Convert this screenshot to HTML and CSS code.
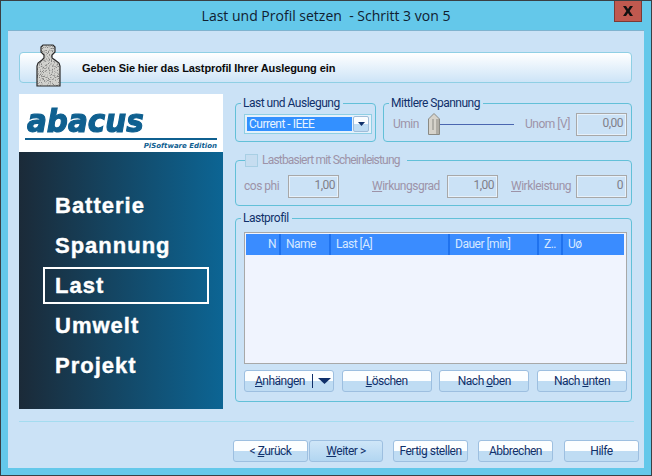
FILE: index.html
```html
<!DOCTYPE html>
<html lang="de">
<head>
    <meta charset="UTF-8" />
    <title>Last und Profil setzen</title>
    <link rel="stylesheet" href="styles.css">
</head>
<body>
<div class="window">
    <div class="titlebar">
        <span>Last und Profil setzen&nbsp; - Schritt 3 von 5</span>
        <div class="close">
            <svg width="12" height="10" viewBox="0 0 12 10"><path d="M1 0h3l2 3 2-3h3L7.600 5 11 10H8L6 7 4 10H1l3.400-5z" fill="#111"/></svg>
        </div>
    </div>
    <div class="client">
        <div class="banner">
            <svg class="weight" width="25" height="44" viewBox="0 0 25 44">
                <filter id="speckle" x="0" y="0" width="100%" height="100%" color-interpolation-filters="sRGB">
                    <feTurbulence type="fractalNoise" baseFrequency="0.9" numOctaves="2" seed="4"/>
                    <feColorMatrix values="0 0 0 0 0.5 0 0 0 0 0.5 0 0 0 0 0.5 5 0 0 0 -2.500"/>
                    <feComposite in2="SourceGraphic" operator="in" result="dots"/>
                    <feMerge><feMergeNode in="SourceGraphic"/><feMergeNode in="dots"/></feMerge>
                </filter>
                <path d="M7 1h10l2 2v5l-3 3v3l3 2 4 3 1 3v20H1V22l1-3 4-3 2-2v-3L5 8V3z" fill="#d2d2ce" filter="url(#speckle)"/>
                <path d="M7 1h10l2 2v5l-3 3v3l3 2 4 3 1 3v20H1V22l1-3 4-3 2-2v-3L5 8V3z" fill="none" stroke="#2a2a2a" stroke-width="1.200"/>
            </svg>
            <b>Geben Sie hier das Lastprofil Ihrer Auslegung ein</b>
        </div>
        <div class="main">
            <div class="sidebar">
                <div class="logo">
                    <div class="logo-name"><span>abacus</span></div>
                    <div class="logo-sub">PiSoftware Edition</div>
                </div>
                <ul class="nav">
                    <li>Batterie</li>
                    <li>Spannung</li>
                    <li class="active">Last</li>
                    <li>Umwelt</li>
                    <li>Projekt</li>
                </ul>
            </div>
            <div class="panel">
                <div class="top-row">
                    <fieldset class="group group-last">
                        <legend>Last und Auslegung</legend>
                        <div class="combo">
                            <span class="combo-value">Current - IEEE</span>
                            <span class="combo-btn"><svg width="7" height="4" viewBox="0 0 7 4"><path d="M0 0h7L3.500 4z" fill="#10306a"/></svg></span>
                        </div>
                    </fieldset>
                    <fieldset class="group group-volt">
                        <legend>Mittlere Spannung</legend>
                        <div class="row">
                            <span class="dim umin">Umin</span>
                            <div class="slider">
                                <svg class="thumb" width="12" height="22" viewBox="0 0 12 22"><path d="M.5 21.500V6L6 .5 11.500 6v15.500z" fill="#d6d3cb" stroke="#8a8a84"/><path d="M8 6v15h3V6z" fill="#b0ada5"/><path d="M5 6v11" stroke="#8a8a84"/></svg>
                            </div>
                            <span class="dim unom">Unom [V]</span>
                            <div class="value">0,00</div>
                        </div>
                    </fieldset>
                </div>
                <fieldset class="group group-load">
                    <legend class="dim"><span class="check"></span>Lastbasiert mit Scheinleistung</legend>
                    <div class="row">
                        <span class="dim cos">cos phi</span>
                        <div class="value">1,00</div>
                        <span class="dim wirk"><u>W</u>irkungsgrad</span>
                        <div class="value">1,00</div>
                        <span class="dim leist"><u>W</u>irkleistung</span>
                        <div class="value">0</div>
                    </div>
                </fieldset>
                <fieldset class="group group-profile">
                    <legend>Lastprofil</legend>
                    <div class="table">
                        <div class="thead">
                            <span class="col-n">N</span>
                            <span class="col-name">Name</span>
                            <span class="col-last">Last [A]</span>
                            <span class="col-dauer">Dauer [min]</span>
                            <span class="col-z">Z..</span>
                            <span class="col-u">Uø</span>
                        </div>
                    </div>
                    <div class="table-buttons">
                        <button class="btn split"><span class="split-label"><u>A</u>nhängen</span><svg width="13" height="6" viewBox="0 0 13 6"><path d="M0 0h13L6.500 6z" fill="#10306a"/></svg></button>
                        <button class="btn"><u>L</u>öschen</button>
                        <button class="btn">Nach <u>o</u>ben</button>
                        <button class="btn">Nach <u>u</u>nten</button>
                    </div>
                </fieldset>
            </div>
        </div>
        <div class="separator"></div>
        <div class="footer">
            <button class="btn">&lt; <u>Z</u>urück</button>
            <button class="btn default"><u>W</u>eiter &gt;</button>
            <button class="btn gap">Fertig stellen</button>
            <button class="btn gap">Abbrechen</button>
            <button class="btn gap">Hilfe</button>
        </div>
    </div>
</div>
</body>
</html>
```

FILE: styles.css
```css
* { margin: 0; padding: 0; box-sizing: border-box; }
body {
    width: 652px;
    height: 476px;
    overflow: hidden;
    font-family: 'Roboto', 'Liberation Sans', sans-serif;
    font-size: 12px;
    letter-spacing: -0.5px;
    color: #10306a;
}
.window {
    width: 652px;
    height: 476px;
    background: #64c8ea;
    border: 1px solid #3a3f44;
    display: flex;
    flex-direction: column;
}
.titlebar {
    height: 29px;
    flex: none;
    position: relative;
    display: flex;
    align-items: center;
    justify-content: center;
    font-family: 'Open Sans', sans-serif;
    font-size: 14px;
    letter-spacing: 0;
    color: #102030;
}
.close {
    position: absolute;
    top: 0;
    right: 9px;
    width: 28px;
    height: 21px;
    background: #c0594f;
    border: 1px solid #7c3a35;
    border-top: none;
    display: flex;
    align-items: center;
    justify-content: center;
}
.client {
    flex: 1;
    margin: 0 7px 7px;
    background: #cbe2f6;
    border-top: 1px solid #7fb3cf;
    padding: 21px 11px 0 11px;
    display: flex;
    flex-direction: column;
}
.banner {
    height: 31px;
    margin-right: 1px;
    position: relative;
    display: flex;
    align-items: center;
    padding-left: 62px;
    background: linear-gradient(#ffffff, #cde4f7);
    border: 1px solid #8fcfe4;
    border-radius: 4px;
    font-family: 'Liberation Sans', sans-serif;
    font-size: 11px;
    letter-spacing: -0.1px;
    color: #0a0a0a;
}
.weight {
    position: absolute;
    left: 16px;
    top: -9px;
}
.main {
    display: flex;
    gap: 12px;
    margin-top: 11px;
}
.sidebar {
    width: 204px;
    height: 315px;
    flex: none;
    display: flex;
    flex-direction: column;
}
.logo {
    height: 58px;
    background: #fff;
    padding: 11px 6px 0 4px;
    color: #0f6090;
    letter-spacing: 0;
}
.logo-name {
    font-family: 'DejaVu Sans', sans-serif;
    font-weight: bold;
    font-style: italic;
    font-size: 32px;
    line-height: 33px;
    height: 35px;
    padding-left: 2px;
    margin-left: 2px;
    border-bottom: 2px solid #0f6090;
}
.logo-name span {
    display: inline-block;
    transform: scaleX(0.92);
    transform-origin: left;
    -webkit-text-stroke: 1.2px #0f6090;
}
.logo-sub {
    font-family: 'DejaVu Sans', sans-serif;
    font-weight: bold;
    font-style: italic;
    font-size: 7px;
    line-height: 10px;
    margin-top: 1px;
    text-align: right;
}
.nav {
    flex: 1;
    list-style: none;
    background: linear-gradient(90deg, #1b2a38, #0c6594);
    padding: 35px 14px 0 24px;
    color: #fff;
    font-family: 'Liberation Sans', sans-serif;
    font-size: 22px;
    font-weight: bold;
    letter-spacing: 1px;
    -webkit-text-stroke: 0.4px #fff;
}
.nav li {
    height: 37px;
    line-height: 33px;
    padding-left: 10px;
    margin-bottom: 3px;
    border: 2px solid transparent;
}
.nav .active { border-color: #fff; }
.panel {
    width: 397px;
    flex: none;
    display: flex;
    flex-direction: column;
    padding-top: 2px;
}
.group {
    min-width: 0;
    border: 1px solid #62c0d8;
    border-radius: 4px;
    padding: 0 4px 0 8px;
}
.group legend {
    margin-left: -3px;
    padding: 0 3px 0 2px;
    line-height: 14px;
}
.top-row {
    display: flex;
    gap: 7px;
    height: 46px;
}
.group-last { width: 141px; flex: none; }
.group-volt { width: 249px; flex: none; }
.combo {
    width: 128px;
    height: 20px;
    margin-top: 4px;
    display: flex;
    border: 1px solid #8fcfe4;
    background: #e4f1fb;
    padding: 2px;
}
.combo-value {
    width: 105px;
    background: #3390ff;
    color: #e8f4ff;
    line-height: 14px;
    padding-left: 2px;
}
.combo-btn {
    margin: -1px 0 -1px 1px;
    flex: 1;
    border: 1px solid #a0bcd8;
    border-radius: 2px;
    background: linear-gradient(#fbfdff 50%, #bfdcf3 50%);
    display: flex;
    align-items: center;
    justify-content: center;
}
.row {
    display: flex;
    align-items: center;
    height: 24px;
}
.dim { color: #9d93a8; }
.group-volt .row { margin-top: 2px; }
.umin { margin-left: 1px; width: 35px; }
.slider {
    width: 86px;
    height: 22px;
    flex: none;
    position: relative;
    display: flex;
    align-items: center;
}
.slider::before {
    content: '';
    flex: 1;
    height: 1px;
    margin-left: 12px;
    background: #4a66b0;
}
.thumb {
    position: absolute;
    left: 0;
    top: 0;
}
.unom { margin-left: 11px; }
.value {
    width: 51px;
    height: 23px;
    flex: none;
    margin-left: auto;
    border: 1px solid #a8a8a8;
    box-shadow: inset 0 0 0 1px #e6f1fb;
    text-align: right;
    padding-right: 3px;
    line-height: 19px;
    color: #80808a;
}
.group-load {
    height: 53px;
    margin-top: 11px;
}
.group-load legend {
    display: flex;
    align-items: center;
    gap: 4px;
    margin-left: 1px;
    padding: 0 7px 0 0;
    letter-spacing: -0.8px;
}
.check {
    width: 13px;
    height: 13px;
    border: 1px solid #a8cfe4;
    background: #c6ddf0;
}
.group-load .row { margin-top: 7px; }
.cos { width: 44px; flex: none; }
.group-load .value { margin-left: 0; }
.wirk { margin-left: 33px; width: 75px; flex: none; }
.leist { margin-left: 13px; width: 65px; flex: none; }
.group-profile {
    height: 191px;
    margin-top: 5px;
}
.table {
    height: 132px;
    margin-top: 7px;
    background: #f0f4fe;
    border: 1px solid #a8a8a8;
}
.thead {
    height: 21px;
    margin: 1px 2px 0 1px;
    background: #3a8cff;
    display: flex;
    align-items: center;
    color: #d6e8ff;
}
.thead span {
    height: 100%;
    line-height: 21px;
    padding-left: 5px;
    border-right: 2px solid #1f72ee;
}
.thead .col-n { width: 35px; text-align: right; padding-right: 3px; }
.thead .col-name { width: 50px; }
.thead .col-last { width: 119px; }
.thead .col-dauer { width: 89px; }
.thead .col-z { width: 24px; }
.thead .col-u { flex: 1; border-right: none; }
.table-buttons {
    display: flex;
    justify-content: space-between;
    margin-top: 6px;
}
.btn {
    width: 90px;
    height: 22px;
    border: 1px solid #9dbfe0;
    border-radius: 3px;
    background: linear-gradient(#fcfeff 50%, #bfdcf3 50%);
    font: inherit;
    letter-spacing: inherit;
    color: #10306a;
}
.split {
    display: flex;
    align-items: center;
    padding-left: 10px;
    gap: 5px;
}
.split-label {
    width: 58px;
    flex: none;
    text-align: left;
    border-right: 1px solid #10306a;
    line-height: 14px;
}
.separator {
    height: 1px;
    margin: 12px -1px 0 0;
    background: #a4dcf0;
}
.footer {
    display: flex;
    margin: 18px -7px 0 214px;
    gap: 1px;
}
.footer .btn { width: 75px; flex: none; }
.footer .gap { margin-left: 9px; }
.footer .default { width: 74px; background: linear-gradient(#cfe6f8, #b2d6f1); }
.footer .btn:last-child { margin-left: 10px; }
```
